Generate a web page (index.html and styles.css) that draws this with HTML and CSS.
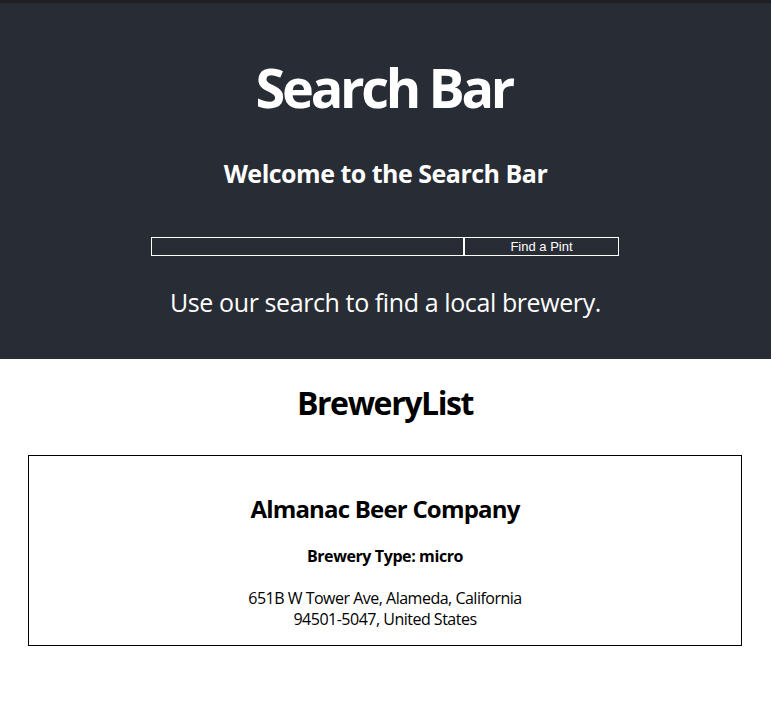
FILE: index.html
```html
<!DOCTYPE html>
<html lang="en">
<head>
<meta charset="utf-8">
<title>Search Bar</title>
<link rel="stylesheet" href="styles.css">
</head>
<body>
<header class="app-header">
  <h1 class="title">Search Bar</h1>
  <h2 class="welcome">Welcome to the Search Bar</h2>
  <form class="search-form">
    <input class="search-input" type="text" aria-label="Search">
    <button class="search-button" type="button">Find a Pint</button>
  </form>
  <p class="tagline">Use our search to find a local brewery.</p>
</header>
<main class="content">
  <h1 class="list-title">BreweryList</h1>
  <section class="card">
    <h2 class="brewery-name">Almanac Beer Company</h2>
    <h4 class="brewery-type">Brewery Type: micro</h4>
    <p class="address"><span class="line">651B W Tower Ave, Alameda, California</span><span class="line">94501-5047, United States</span></p>
  </section>
</main>
</body>
</html>
```
FILE: styles.css
```css
* { box-sizing: border-box; }
html, body { margin: 0; padding: 0; background: #fff; }
body { font-family: "Open Sans", "Noto Sans", sans-serif; color: #000; }

.app-header {
  background: #282c34;
  border-top: 3px solid #1f2024;
  color: #fff;
  display: flex;
  flex-direction: column;
  align-items: center;
  padding: 57px 0 44px;
}
.title {
  margin: 0;
  font-size: 54px;
  line-height: 1;
  font-weight: 700;
  letter-spacing: -3.3px;
  text-indent: -3.3px;
}
.welcome {
  margin: 47px 0 0;
  font-size: 25px;
  line-height: 1;
  font-weight: 700;
  letter-spacing: -0.5px;
}
.search-form {
  margin: 51px 1px 0 0;
  display: flex;
  gap: 0;
  height: 19px;
}
.search-input {
  width: 313px;
  height: 19px;
  margin: 0;
  padding: 0 2px;
  border: 1px solid #fff;
  background: transparent;
  color: #fff;
  outline: none;
}
.search-button {
  width: 155px;
  height: 19px;
  margin: 0;
  padding: 0;
  border: 1px solid #fff;
  background: transparent;
  color: #fff;
  font-family: "Liberation Sans", Arial, sans-serif;
  font-size: 13px;
  line-height: 17px;
}
.tagline {
  margin: 34px 0 0;
  font-size: 25px;
  line-height: 1;
  font-weight: 400;
  letter-spacing: -0.4px;
}

.content {
  display: flex;
  flex-direction: column;
  align-items: stretch;
  padding: 0 29px 0 28px;
}
.list-title {
  margin: 28px 0 0;
  text-align: center;
  font-size: 32px;
  line-height: 1;
  font-weight: 700;
  letter-spacing: -1.4px;
}
.card {
  margin-top: 36px;
  border: 1px solid #000;
  display: flex;
  flex-direction: column;
  align-items: center;
  padding: 41px 0 15px;
}
.brewery-name {
  margin: 0;
  font-size: 24px;
  line-height: 1;
  font-weight: 700;
  letter-spacing: -0.8px;
}
.brewery-type {
  margin: 27px 0 0;
  font-size: 16px;
  line-height: 1;
  font-weight: 700;
  letter-spacing: -0.4px;
}
.address {
  margin: 24px 0 0;
  font-size: 16px;
  line-height: 21px;
  text-align: center;
  letter-spacing: -0.5px;
  display: flex;
  flex-direction: column;
  align-items: center;
}
.line { display: block; }
```
